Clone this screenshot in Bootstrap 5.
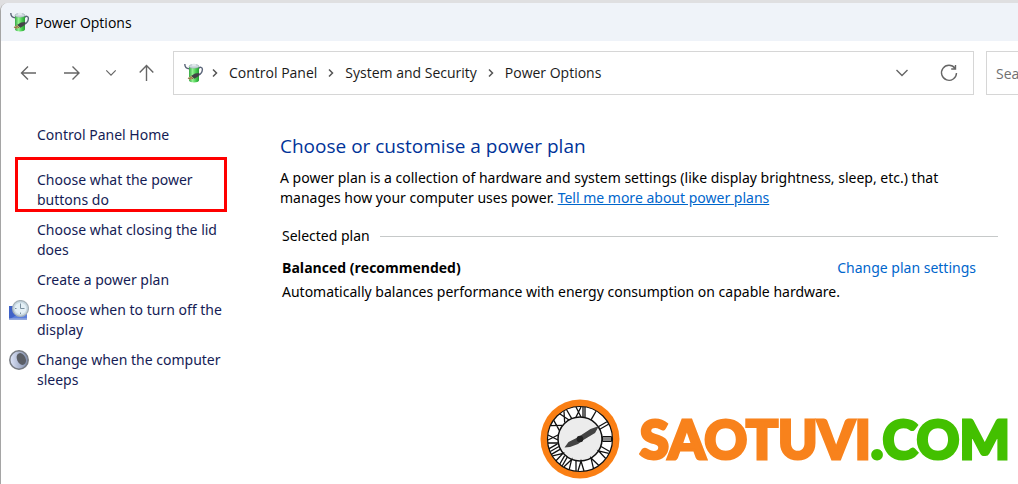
<!DOCTYPE html>
<html lang="en">
<head>
<meta charset="utf-8">
<meta name="viewport" content="width=device-width, initial-scale=1">
<title>Power Options</title>
<link href="https://cdn.jsdelivr.net/npm/bootstrap@5.3.0/dist/css/bootstrap.min.css" rel="stylesheet">
<style>
  body { font-family: "Open Sans", "Noto Sans", sans-serif; font-size: 14px; line-height: 20px; color: #000; background: #dfdfe1; overflow-x: hidden; }
  .window { margin-top: 3px; min-height: calc(100vh - 3px); background: #fff; border-left: 1px solid #a5a5a5; border-top-left-radius: 8px; overflow: hidden; }
  .title-bar { height: 38px; background: #eff3f9; padding-left: 9px; gap: 5px; }
  .title-bar h1 { font-size: 14px; line-height: 20px; font-weight: 400; padding-top: 2px; }
  .toolbar { padding-top: 10px; padding-left: 16px; }
  .tool-btn { border: 0; background: none; padding: 0; color: #666; line-height: 0; }
  .nav-buttons { gap: 22px; }
  .address { height: 44px; border: 1px solid #d6d6d6; margin-left: 18px; padding: 0 14px 0 10px; }
  .address ol { gap: 11px; }
  .address a { color: #1a1a1a; text-decoration: none; }
  .address-buttons { gap: 30px; }
  .search { width: 32px; height: 44px; margin-left: 12px; border: 1px solid #d6d6d6; border-right: 0; overflow: hidden; }
  .search input { width: 240px; height: 42px; border: 0; outline: 0; padding: 0 9px; color: #666; }
  .search input::placeholder { color: #707070; opacity: 1; }
  .side, .main { font-family: "Noto Sans", "Open Sans", sans-serif; }
  .side { width: 232px; padding: 30px 0 0 8px; }
  .side a { color: #151c55; text-decoration: none; }
  .side li { margin-top: 10px; gap: 8px; }
  .side li:first-child { margin: 0 0 25px; }
  .side .slot { width: 20px; height: 20px; flex: none; }
  .marked::after { content: ""; position: absolute; inset: -13px 6px -2px 6px; border: 3px solid #f00; pointer-events: none; }
  .main { padding: 37px 20px 0 47px; }
  .main h2 { font: 400 19px/28px "Open Sans", sans-serif; color: #003399; margin-bottom: 8px; }
  .main p { margin: 0; }
  .main a { color: #0066cc; }
  .plan { padding-left: 2px; }
  .plan hr { border-color: #c6c9c9; opacity: 1; margin: 0; }
  .plan h3 { font: 700 14px/20px "Open Sans", sans-serif; }
  .plan .caption-row { margin-top: 18px; gap: 10px; }
  .plan .plan-row { margin-top: 12px; margin-right: 22px; }
  .brand { padding: 9px 8px 4px 0; gap: 20px; }
  .wordmark { font: 900 53px/72px Lato, "Open Sans", sans-serif; color: #f8821c; -webkit-text-stroke: 3px currentColor; }
  .wordmark span { color: #43c000; }
</style>
</head>
<body>
<svg class="position-absolute" width="0" height="0" aria-hidden="true">
  <defs>
    <linearGradient id="cell" x1="0" x2="1"><stop offset="0" stop-color="#35a844"/><stop offset=".35" stop-color="#92f090"/><stop offset=".7" stop-color="#45cc4d"/><stop offset="1" stop-color="#2a9a38"/></linearGradient>
    <symbol id="battery" viewBox="0 0 20 20">
      <path d="M.8 1c0 3 1.500 4.700 4.500 4.700M14.800 5.500c.8-2 3.800-1.500 3.600 1-.2 2.500-1.500 4.600-3.800 5.600" fill="none" stroke="#5a6478" stroke-width="1.400"/>
      <path d="M5 3.500h10v14c0 2.500-10 2.500-10 0z" fill="url(#cell)"/>
      <ellipse cx="10" cy="3.300" rx="5" ry="1.900" fill="#cfd9df" stroke="#93a4ac" stroke-width=".6"/>
      <ellipse cx="10" cy="1.900" rx="2.200" ry="1.200" fill="#e3e9ed"/>
      <path d="M7 13l4-2.500 4.500-.5-.8 3-4.200 2.800z" fill="#434248"/>
      <path d="M3.500 15.500l3.700-2.500 2.600 2.700L6 16.800z" fill="#c9a96c"/><path d="M4 15l3 1M6 13.800l3 2" stroke="#6c583e" stroke-width=".7"/>
    </symbol>
    <symbol id="crumb" viewBox="0 0 6 10"><path d="M1 1.500L4.500 5 1 8.500" fill="none" stroke="#555" stroke-width="1.500"/></symbol>
    <symbol id="down" viewBox="0 0 14 8"><path d="M1.500 1L7 6.500 12.500 1" fill="none" stroke="currentColor" stroke-width="1.400"/></symbol>
  </defs>
</svg>
<div class="window d-flex flex-column">
  <header class="title-bar d-flex align-items-center">
    <svg width="20" height="20" aria-hidden="true"><use href="#battery"/></svg>
    <h1 class="m-0">Power Options</h1>
  </header>

  <nav class="toolbar d-flex align-items-center" aria-label="Navigation">
    <div class="nav-buttons d-flex align-items-center flex-shrink-0">
      <button class="tool-btn" aria-label="Back"><svg width="22" height="22" fill="none" stroke="currentColor" stroke-width="1.400"><path d="M19 11H4.500M11 4.500L4.500 11l6.500 6.500"/></svg></button>
      <button class="tool-btn" aria-label="Forward"><svg width="22" height="22" fill="none" stroke="currentColor" stroke-width="1.400"><path d="M3 11h14.500M11.500 4.500L18 11l-6.500 6.500"/></svg></button>
      <button class="tool-btn" aria-label="Recent"><svg width="12" height="8"><use href="#down"/></svg></button>
      <button class="tool-btn" aria-label="Up"><svg width="16" height="22" fill="none" stroke="currentColor" stroke-width="1.400"><path d="M7.500 19V4M.7 10.500l6.800-7 6.800 7"/></svg></button>
    </div>
    <div class="address d-flex align-items-center flex-grow-1">
      <svg width="20" height="20" class="flex-shrink-0" aria-hidden="true"><use href="#battery"/></svg>
      <ol class="list-unstyled d-flex align-items-center m-0 ms-2 flex-grow-1">
        <li><svg width="6" height="10" class="d-block"><use href="#crumb"/></svg></li>
        <li><a href="#">Control Panel</a></li>
        <li><svg width="6" height="10" class="d-block"><use href="#crumb"/></svg></li>
        <li><a href="#">System and Security</a></li>
        <li><svg width="6" height="10" class="d-block"><use href="#crumb"/></svg></li>
        <li><a href="#">Power Options</a></li>
      </ol>
      <div class="address-buttons d-flex align-items-center">
        <button class="tool-btn" aria-label="Previous locations"><svg width="14" height="8"><use href="#down"/></svg></button>
        <button class="tool-btn" aria-label="Refresh"><svg width="20" height="20" fill="none" stroke="currentColor" stroke-width="1.400"><path d="M16 5.300A7.500 7.500 0 1 0 17.500 10M16.500 2v4h-4.300"/></svg></button>
      </div>
    </div>
    <div class="search flex-shrink-0"><input type="text" placeholder="Search Control Panel" aria-label="Search Control Panel"></div>
  </nav>

  <div class="d-flex">
    <aside class="side flex-shrink-0">
      <ul class="list-unstyled m-0">
        <li class="d-flex"><span class="slot"></span><a href="#">Control Panel Home</a></li>
        <li class="d-flex position-relative marked"><span class="slot"></span><a href="#">Choose what the power<br>buttons do</a></li>
        <li class="d-flex"><span class="slot"></span><a href="#">Choose what closing the lid<br>does</a></li>
        <li class="d-flex"><span class="slot"></span><a href="#">Create a power plan</a></li>
        <li class="d-flex">
          <svg class="slot" viewBox="0 0 20 20" aria-hidden="true"><path d="M0 6h18v13.500H0z" fill="#3f62c8"/><path d="M0 19.500L18 9v10.500z" fill="#5c80dc"/><path d="M0 19h18" stroke="#a9b9dc"/><circle cx="11.500" cy="8.500" r="7.900" fill="#c9dae3" stroke="#a5b1b8" stroke-width="1.300"/><circle cx="11.500" cy="8.500" r="5.800" fill="#e4f0f6"/><path d="M11.500 3.500v5h4M11.500 12.500v1.500M6 8.500h1.500" fill="none" stroke="#7a909f"/></svg>
          <a href="#">Choose when to turn off the<br>display</a></li>
        <li class="d-flex">
          <svg class="slot" viewBox="0 0 20 20" aria-hidden="true"><defs><linearGradient id="moon"><stop offset="0" stop-color="#dfe6fa"/><stop offset="1" stop-color="#7d8aa8"/></linearGradient></defs><circle cx="10" cy="10" r="9.200" fill="url(#moon)" stroke="#777b82" stroke-width="1.500"/><ellipse cx="12.300" cy="9" rx="4.300" ry="6.200" transform="rotate(-25 12.300 9)" fill="#5b5e65"/></svg>
          <a href="#">Change when the computer<br>sleeps</a></li>
      </ul>
    </aside>

    <main class="main flex-grow-1">
      <h2>Choose or customise a power plan</h2>
      <p>A power plan is a collection of hardware and system settings (like display brightness, sleep, etc.) that<br>manages how your computer uses power. <a href="#">Tell me more about power plans</a></p>
      <section class="plan">
        <div class="caption-row d-flex align-items-center"><span>Selected plan</span><hr class="flex-grow-1"></div>
        <div class="plan-row d-flex justify-content-between">
          <h3 class="m-0">Balanced (recommended)</h3>
          <a href="#" class="text-decoration-none">Change plan settings</a>
        </div>
        <p class="mt-1">Automatically balances performance with energy consumption on capable hardware.</p>
      </section>
    </main>
  </div>

  <footer class="brand d-flex justify-content-end align-items-center">
    <svg width="80" height="80" viewBox="0 0 80 80" aria-hidden="true">
      <circle cx="40" cy="40" r="39.500" fill="#fa7f14"/>
      <circle cx="40" cy="40" r="32.500" fill="#fff" stroke="#111" stroke-width="1.200"/>
      <circle cx="40" cy="40" r="22" fill="#ececec" stroke="#111" stroke-width="1.500"/>
      <path d="M62.500 37.500h9v5h-9z" fill="#888" stroke="#111"/>
      <g fill="none" stroke="#111" stroke-width="1.300">
        <path d="M36 8l5 10M41 8l-5 10M43 8v10M45 8v10"/>
        <path d="M40 8v10" transform="rotate(30 40 40)"/>
        <path d="M38.500 8v10M41.500 8v10" transform="rotate(60 40 40)"/>
        <path d="M36 8v10M38 8l3 10 3-10" transform="rotate(120 40 40)"/>
        <path d="M37 8l3 10 3-10" transform="rotate(150 40 40)"/>
        <path d="M36 8l3 10 3-10M44 8v10" transform="rotate(180 40 40)"/>
        <path d="M34 8l3 10 3-10M42 8v10M45 8v10" transform="rotate(210 40 40)"/>
        <path d="M33 8l3 10 3-10M41 8v10M44 8v10M47 8v10" transform="rotate(240 40 40)"/>
        <path d="M36 8v10M39 8l5 10M44 8l-5 10" transform="rotate(270 40 40)"/>
        <path d="M37 8l6 10M43 8l-6 10" transform="rotate(300 40 40)"/>
        <path d="M35 8l5 10M40 8l-5 10M43 8v10" transform="rotate(330 40 40)"/>
      </g>
      <path d="M24.500 48.500l4-5.500 9-4.500 13-8.500 8.500-3-4 7-12.500 7.500-4.500 3.500-8 3z" fill="#444"/>
      <circle cx="40" cy="40" r="3.300" fill="#222"/>
    </svg>
    <div class="wordmark">SAOTUVI<span>.COM</span></div>
  </footer>
</div>
<script src="https://cdn.jsdelivr.net/npm/bootstrap@5.3.0/dist/js/bootstrap.bundle.min.js"></script>
</body>
</html>
